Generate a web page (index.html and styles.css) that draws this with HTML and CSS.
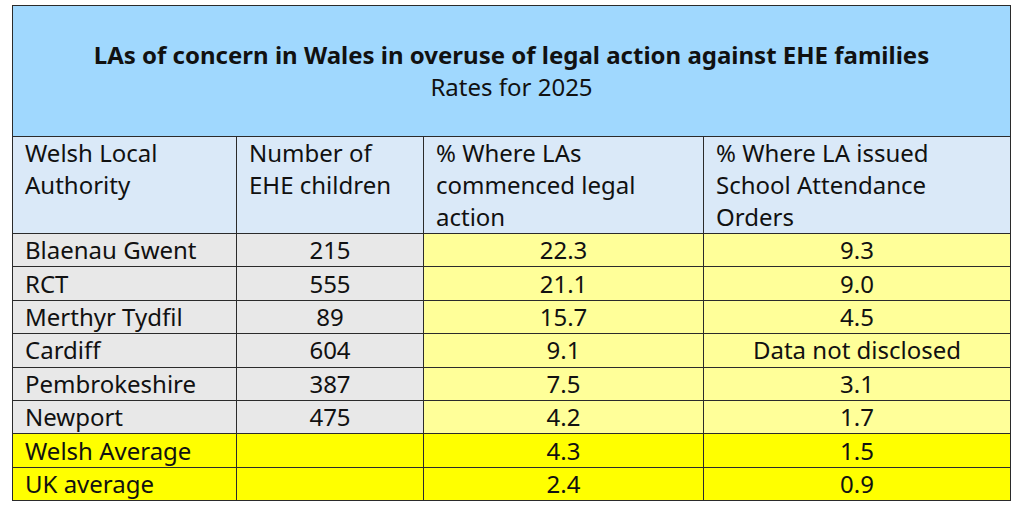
FILE: index.html
```html
<!DOCTYPE html>
<html>
<head>
<meta charset="utf-8">
<link rel="stylesheet" href="styles.css">
</head>
<body>
<table class="data">
  <colgroup>
    <col class="c1"><col class="c2"><col class="c3"><col class="c4">
  </colgroup>
  <tr class="title-row">
    <td colspan="4" class="title">
      <div class="title-main">LAs of concern in Wales in overuse of legal action against EHE families</div>
      <div class="title-sub">Rates for 2025</div>
    </td>
  </tr>
  <tr class="head-row">
    <td>Welsh Local<br>Authority</td>
    <td>Number of<br>EHE children</td>
    <td>% Where LAs<br>commenced legal<br>action</td>
    <td>% Where LA issued<br>School Attendance<br>Orders</td>
  </tr>
  <tr class="row">
    <td class="grey">Blaenau Gwent</td><td class="grey num">215</td><td class="lemon num">22.3</td><td class="lemon num">9.3</td>
  </tr>
  <tr class="row">
    <td class="grey">RCT</td><td class="grey num">555</td><td class="lemon num">21.1</td><td class="lemon num">9.0</td>
  </tr>
  <tr class="row">
    <td class="grey">Merthyr Tydfil</td><td class="grey num">89</td><td class="lemon num">15.7</td><td class="lemon num">4.5</td>
  </tr>
  <tr class="row">
    <td class="grey">Cardiff</td><td class="grey num">604</td><td class="lemon num">9.1</td><td class="lemon num">Data not disclosed</td>
  </tr>
  <tr class="row">
    <td class="grey">Pembrokeshire</td><td class="grey num">387</td><td class="lemon num">7.5</td><td class="lemon num">3.1</td>
  </tr>
  <tr class="row">
    <td class="grey">Newport</td><td class="grey num">475</td><td class="lemon num">4.2</td><td class="lemon num">1.7</td>
  </tr>
  <tr class="row">
    <td class="bright">Welsh Average</td><td class="bright"></td><td class="bright num">4.3</td><td class="bright num">1.5</td>
  </tr>
  <tr class="row">
    <td class="bright">UK average</td><td class="bright"></td><td class="bright num">2.4</td><td class="bright num">0.9</td>
  </tr>
</table>
</body>
</html>
```
FILE: styles.css
```css
html, body {
  margin: 0;
  padding: 0;
  background: #ffffff;
}
body {
  padding: 5px 0 0 12px;
  font-family: "Noto Sans", "Open Sans", sans-serif;
  color: #111111;
}
.data {
  border-collapse: collapse;
  table-layout: fixed;
  width: 998px;
}
.c1 { width: 224px; }
.c2 { width: 187px; }
.c3 { width: 280px; }
.c4 { width: 307px; }
.data td {
  border: 1px solid #2b2b2b;
  padding: 0 12px;
  font-size: 24px;
  line-height: 32px;
  vertical-align: middle;
}
.title-row td {
  height: 130px;
  background: #a0d8fe;
  text-align: center;
  padding: 0;
}
.title-main {
  font-weight: 700;
  font-size: 24px;
  line-height: 32px;
}
.title-sub {
  font-size: 24px;
  line-height: 32px;
}
.head-row td {
  height: 96px;
  background: #dae9f8;
  vertical-align: top;
  padding-top: 0;
}
.row td {
  height: 32.4px;
  padding-top: 0;
  padding-bottom: 0;
  line-height: 30px;
}
.grey { background: #e8e8e8; }
.lemon { background: #ffff99; }
.bright { background: #ffff00; }
.num { text-align: center; }
```
